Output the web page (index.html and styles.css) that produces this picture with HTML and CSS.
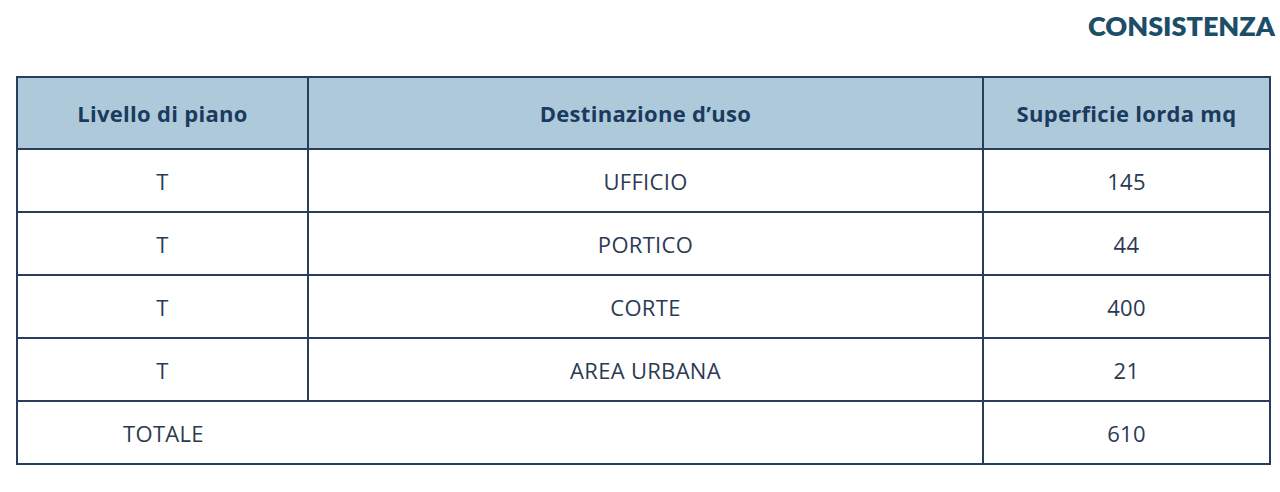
FILE: index.html
```html
<!DOCTYPE html>
<html lang="it">
<head>
<meta charset="utf-8">
<title>Consistenza</title>
<link rel="stylesheet" href="styles.css">
</head>
<body>
<div class="page">
  <header class="title-bar">
    <h2 class="title">CONSISTENZA</h2>
  </header>
  <table class="grid">
    <colgroup>
      <col class="c1">
      <col class="c2">
      <col class="c3">
    </colgroup>
    <thead>
      <tr>
        <th>Livello di piano</th>
        <th>Destinazione d’uso</th>
        <th>Superficie lorda mq</th>
      </tr>
    </thead>
    <tbody>
      <tr><td>T</td><td>UFFICIO</td><td>145</td></tr>
      <tr><td>T</td><td>PORTICO</td><td>44</td></tr>
      <tr><td>T</td><td>CORTE</td><td>400</td></tr>
      <tr><td>T</td><td>AREA URBANA</td><td>21</td></tr>
      <tr class="total"><td colspan="2"><span class="total-label">TOTALE</span></td><td>610</td></tr>
    </tbody>
  </table>
</div>
</body>
</html>
```
FILE: styles.css
```css
html, body {
  margin: 0;
  padding: 0;
  background: #ffffff;
}

.page {
  width: 1280px;
  height: 492px;
  padding: 0 11px 0 16px;
  box-sizing: border-box;
}

.title-bar {
  display: flex;
  justify-content: flex-end;
  height: 76px;
}

.title {
  margin: 11px -6px 0 0;
  font-family: Lato, "Liberation Sans", sans-serif;
  font-weight: 800;
  font-size: 27px;
  line-height: 30px;
  color: #1c4e68;
  letter-spacing: 0;
}

.grid {
  width: 1253px;
  border-collapse: collapse;
  table-layout: fixed;
  font-family: "Open Sans", "Noto Sans", sans-serif;
  color: #2b3a52;
}

.c1 { width: 291px; }
.c2 { width: 675px; }
.c3 { width: 287px; }

.grid th,
.grid td {
  border: 2px solid #283c5c;
  text-align: center;
  padding: 0;
}

.grid th {
  background: #aecada;
  color: #1b3a5e;
  font-weight: 700;
  font-size: 22px;
  letter-spacing: 0.3px;
  height: 70px;
}

.grid td {
  font-size: 22px;
  font-weight: 400;
  letter-spacing: 0.3px;
  height: 61px;
}

.total-label {
  display: inline-block;
  width: 291px;
  text-align: center;
}

.total td:first-child {
  text-align: left;
}
```
